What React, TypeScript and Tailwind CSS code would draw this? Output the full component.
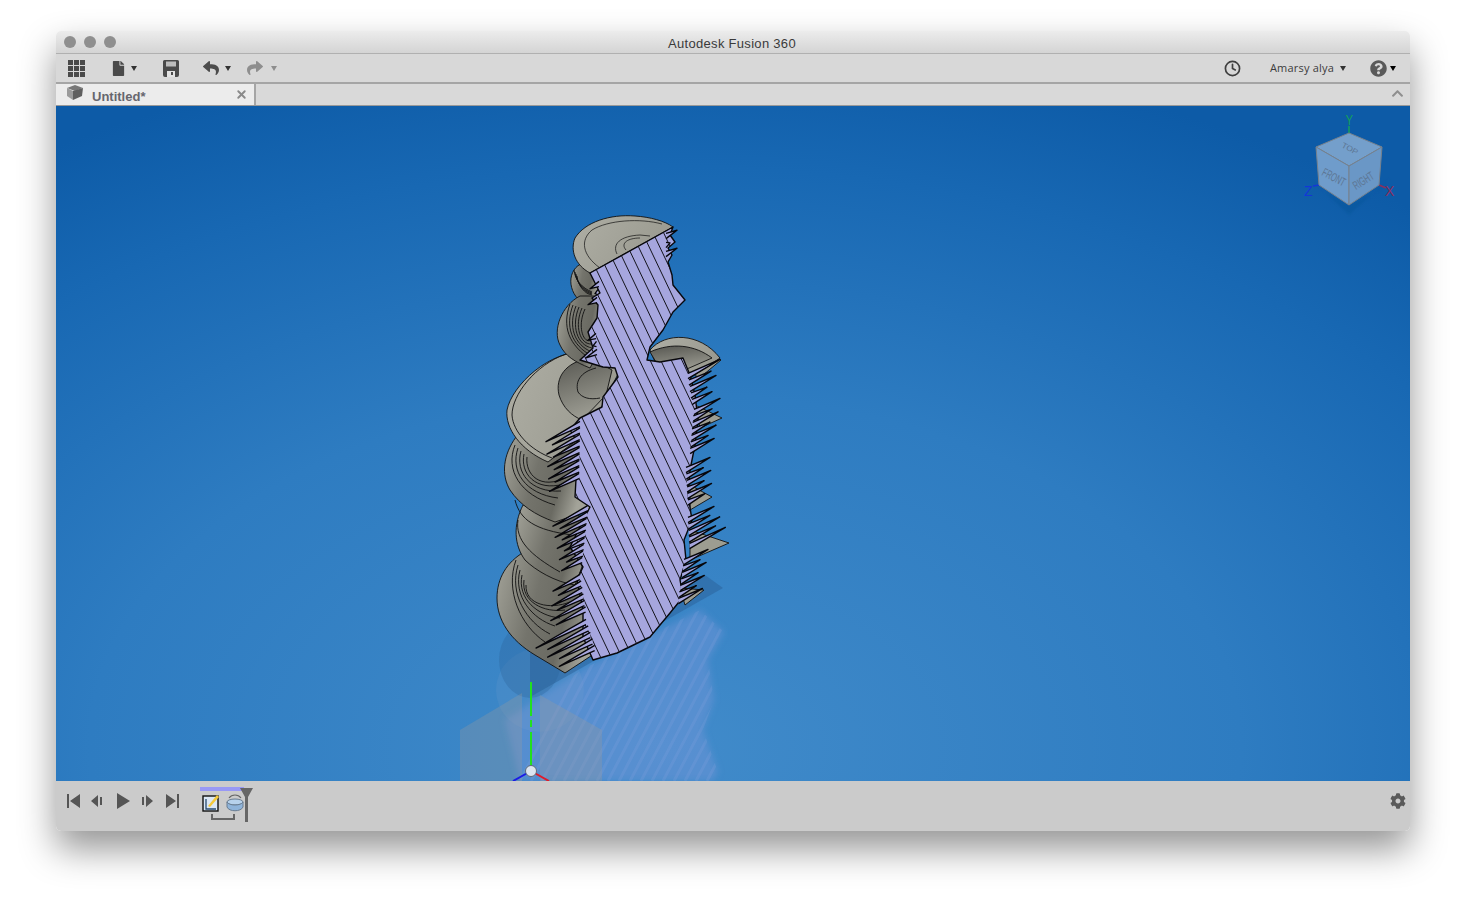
import React from 'react';
import { Clock, X } from 'lucide-react';
import { FaCog, FaFile, FaQuestionCircle, FaReply, FaShare, FaChevronUp } from 'react-icons/fa';

const faceOutline =
  '590,273 600,293 592,298 598,305 597,318 588,332 593,348 580,360 603,367 615,368 618,377 603,397 602,407 580,418 570,430 578,443 575,497 590,507 570,547 583,567 577,580 583,610 583,637 593,660 617,653 650,637 670,613 683,597 680,580 686,560 684,540 692,520 688,495 690,470 695,445 698,420 695,395 690,375 683,358 660,362 647,360 650,347 663,330 673,312 685,300 673,285 672,275 668,262 672,255 668,248 675,242 670,235 673,227';

const reflection = 'M585 668 L700 610 L724 632 L708 660 L714 700 L703 730 L718 772 L712 781 L520 781 L505 720 Z';

const stripes = Array.from({ length: 48 }, (_, i) => 330 + i * 10.6);
const ghostStripes = Array.from({ length: 20 }, (_, i) => 520 + i * 11);

const plates = [
  '690,352 721,360 697,380',
  '695,405 722,418 700,428',
  '690,485 712,497 690,510',
  '690,530 729,543 690,560',
  '680,588 704,590 685,605',
];

// saw teeth on the cut edge: [base x, base y, tip x, tip y]
const leftTeeth: number[][] = [];
const addLeft = (y0: number, y1: number, bx0: number, bx1: number, tx0: number, tx1: number, step = 6.5) => {
  for (let y = y0, i = 0; y <= y1; y += step, i++) {
    const t = (y - y0) / (y1 - y0);
    const wob = i % 2 ? 6 : 0;
    const bx = bx0 + (bx1 - bx0) * t;
    const tx = tx0 + (tx1 - tx0) * t + wob;
    leftTeeth.push([bx, y, tx, y + (bx - tx) * 0.52]);
  }
};
addLeft(424, 482, 580, 579, 546, 550);
addLeft(508, 562, 588, 582, 553, 562);
addLeft(577, 612, 580, 586, 553, 550);
addLeft(622, 652, 586, 596, 536, 563);
addLeft(284, 300, 599, 597, 590, 588, 8);
addLeft(336, 352, 596, 597, 588, 586, 8);

const rightTeeth: number[][] = [];
const addRight = (y0: number, y1: number, bx0: number, bx1: number, tx0: number, tx1: number, step = 6.5) => {
  for (let y = y0, i = 0; y <= y1; y += step, i++) {
    const t = (y - y0) / (y1 - y0);
    const wob = i % 2 ? -7 : 0;
    const bx = bx0 + (bx1 - bx0) * t;
    const tx = tx0 + (tx1 - tx0) * t + wob;
    rightTeeth.push([bx, y, tx, y - (tx - bx) * 0.52]);
  }
};
addRight(376, 402, 688, 692, 720, 712);
addRight(412, 452, 694, 690, 720, 714);
addRight(470, 504, 686, 688, 710, 712);
addRight(520, 552, 688, 690, 714, 728);
addRight(562, 604, 684, 678, 708, 702);
addRight(236, 262, 666, 666, 677, 677, 9);

const rings = [0, 1, 2, 3, 4, 5];

const ModelView = () => (
  <svg className="absolute inset-0 h-full w-full" viewBox="56 106 1354 675">
    <defs>
      <linearGradient id="disc" x1="0" y1="0" x2="1" y2="0.3">
        <stop offset="0%" stopColor="#a4a49a" />
        <stop offset="45%" stopColor="#74746c" />
        <stop offset="75%" stopColor="#6a6a62" />
        <stop offset="100%" stopColor="#a3a399" />
      </linearGradient>
      <linearGradient id="discLight" x1="0" y1="0" x2="1" y2="0.4">
        <stop offset="0%" stopColor="#aeaea4" />
        <stop offset="100%" stopColor="#9a9a90" />
      </linearGradient>
      <linearGradient id="hollow" x1="0.3" y1="0" x2="0.6" y2="1">
        <stop offset="0%" stopColor="#5c5c56" />
        <stop offset="100%" stopColor="#a2a298" />
      </linearGradient>
      <clipPath id="face">
        <polygon points={faceOutline} />
      </clipPath>
      <clipPath id="ghost">
        <path d={reflection} />
      </clipPath>
      <filter id="soft">
        <feGaussianBlur stdDeviation="1.5" />
      </filter>
      <filter id="softer">
        <feGaussianBlur stdDeviation="3" />
      </filter>
    </defs>

    {/* ground: reflection, shadow and origin planes */}
    <path d={reflection} fill="#6d93d8" fillOpacity="0.5" filter="url(#softer)" />
    <g clipPath="url(#ghost)" stroke="#8aa6e0" strokeOpacity="0.22" strokeWidth="3">
      {ghostStripes.map((x) => (
        <line key={x} x1={x} y1="781" x2={x + 90} y2="610" />
      ))}
    </g>
    <ellipse cx="540" cy="690" rx="44" ry="42" fill="#8aa6cc" fillOpacity="0.14" />
    <ellipse cx="530" cy="660" rx="31" ry="38" fill="#2a5f96" fillOpacity="0.3" />
    <path d="M530 697 L723 588 L705 575 L600 610 L530 650 Z" fill="#2a6097" fillOpacity="0.5" />
    <polygon points="460,730 522,693 522,781 460,781" fill="#9a9a9a" fillOpacity="0.3" />
    <polygon points="540,695 602,730 602,781 540,781" fill="#9a9a9a" fillOpacity="0.3" />

    {/* origin axes */}
    <line x1="531" y1="682" x2="531" y2="716" stroke="#22e01f" strokeWidth="2" />
    <line x1="531" y1="720" x2="531" y2="727" stroke="#22e01f" strokeWidth="2" />
    <line x1="531" y1="732" x2="531" y2="766" stroke="#22e01f" strokeWidth="2" />
    <line x1="531" y1="771" x2="513" y2="781" stroke="#1a1ae6" strokeWidth="2" />
    <line x1="531" y1="771" x2="549" y2="781" stroke="#e01a2a" strokeWidth="2" />
    <circle cx="531" cy="771" r="5.5" fill="#dbe4f0" stroke="#5d6a78" strokeWidth="1" />

    {/* turned body, lowest disc first */}
    <g stroke="#111" strokeWidth="0.9" strokeLinejoin="round">
      {plates.map((p) => (
        <polygon key={p} points={p} fill="#9d9d91" />
      ))}
      <path d="M565 673 L535 655 C510 640 497 620 497 598 C497 578 507 562 524 552 L600 560 L600 650 Z" fill="url(#disc)" />
      {rings.map((k) => (
        <path
          key={`low-${k}`}
          d={`M${516 + k * 2} ${560 + k * 5} C${505 + k * 4} ${590 + k * 3} ${520 + k * 6} ${625 - k * 3} ${545 + k * 5} ${642 - k * 8}`}
          fill="none"
        />
      ))}
      <path d="M523 505 C513 525 514 545 525 560 C535 570 555 582 575 585 L600 520 Z" fill="url(#disc)" />
      <path d="M518 520 C515 540 530 555 560 572" fill="none" />
      <path d="M516 437 C503 455 501 475 510 490 C520 505 535 515 555 522 L590 510 L590 440 Z" fill="url(#disc)" />
      {rings.slice(0, 5).map((k) => (
        <path
          key={`mid-${k}`}
          d={`M${515 + k * 3} ${445 + k * 3} C${505 + k * 5} ${470 + k} ${520 + k * 5} ${495 - k} ${555 + k * 3} ${505 - k * 7}`}
          fill="none"
        />
      ))}
      <path d="M515 500 C520 520 535 530 572 535" fill="none" />

      {/* back rim */}
      <path d="M650 350 C665 332 700 332 720 358 L690 378 L655 362 Z" fill="url(#discLight)" />
      <path d="M650 352 C672 342 695 345 712 358 L680 372 L656 362 Z" fill="url(#hollow)" />

      {/* big shoulder */}
      <path d="M585 352 C550 350 512 385 507 410 C505 428 520 450 548 462 L590 430 L620 370 Z" fill="url(#discLight)" />
      <path d="M566 354 C535 365 512 395 512 415 C513 432 530 450 552 458" fill="none" />
      <path d="M590 358 C565 362 555 378 559 395 C563 408 572 416 582 420 L606 395 L612 370 Z" fill="url(#hollow)" />
      <path d="M596 368 C580 372 575 382 578 392 C582 398 590 400 600 398" fill="none" />

      {/* neck */}
      <path d="M590 262 C570 262 565 285 578 299 L600 306 L600 262 Z" fill="url(#disc)" />
      {rings.slice(0, 4).map((k) => (
        <path key={`stack-${k}`} d={`M${574 + k} ${270 + k * 2} C${575 + k} ${280 + k * 2} ${582 + k} ${288 + k * 2} 592 ${292 + k}`} fill="none" />
      ))}
      <path d="M580 296 C562 305 552 330 560 345 C565 356 575 362 590 368 L605 340 L600 296 Z" fill="url(#disc)" />
      {rings.map((k) => (
        <path key={`neck-${k}`} d={`M${570 + k * 3} ${304 + k} C${562 + k * 3} ${326} ${568 + k * 3} ${345} ${592} ${360 - k * 4}`} fill="none" />
      ))}

      {/* head */}
      <path d="M590 273 C575 265 570 250 575 238 C585 222 610 214 635 216 C650 217 665 221 673 227 Z" fill="url(#discLight)" />
      <path d="M600 268 C582 255 580 240 592 230 C608 220 640 218 662 224" fill="none" strokeWidth="0.7" />
      <path d="M617 254 C612 244 620 236 640 235 L650 236" fill="none" strokeWidth="0.7" />
      <path d="M626 250 C620 243 628 238 640 238" fill="none" strokeWidth="0.7" />
    </g>

    {/* cut face */}
    <polygon points={faceOutline} fill="#a6a6de" stroke="#08080c" strokeWidth="1.4" strokeLinejoin="round" />
    <g clipPath="url(#face)" stroke="#14141c" strokeWidth="1">
      {stripes.map((x) => (
        <line key={x} x1={x} y1="200" x2={x + 238} y2="700" />
      ))}
    </g>

    {/* needles along the cut edge, open at the base so they run into the face */}
    <g fill="#a6a6de" stroke="#06060a" strokeWidth="1.4" strokeLinejoin="round">
      {leftTeeth.map(([bx, by, tx, ty], i) => (
        <path key={`lt-${i}`} d={`M${bx} ${by - 2.6} L${tx} ${ty} L${bx} ${by + 2.6}`} />
      ))}
      {rightTeeth.map(([bx, by, tx, ty], i) => (
        <path key={`rt-${i}`} d={`M${bx} ${by - 2.6} L${tx} ${ty} L${bx} ${by + 2.6}`} />
      ))}
    </g>

    {/* view cube */}
    <polygon points="1349,205 1322,190 1310,178 1349,215 1390,178 1379,190" fill="#0d4d8f" fillOpacity="0.35" filter="url(#soft)" />
    <line x1="1349" y1="126" x2="1349" y2="134" stroke="#16a05a" strokeWidth="1.5" />
    <line x1="1319" y1="185" x2="1313" y2="186" stroke="#1436d8" strokeWidth="1.5" />
    <line x1="1379" y1="185" x2="1386" y2="188" stroke="#8b2f5e" strokeWidth="1.5" />
    <g stroke="#77818c" strokeWidth="1" strokeLinejoin="round">
      <polygon points="1349,133 1382,147 1349,166 1316,147" fill="#749fcb" />
      <polygon points="1316,147 1349,166 1349,205 1319,185" fill="#6f9ccb" />
      <polygon points="1349,166 1382,147 1379,185 1349,205" fill="#6a97c6" />
    </g>
    <g fontFamily="'Liberation Sans', sans-serif" fontSize="10" fill="#5d7693">
      <text x="0" y="0" transform="translate(1341,147) rotate(28) scale(0.85,0.8)">TOP</text>
      <text x="0" y="0" transform="translate(1321,175) rotate(28) scale(0.72,1.2)">FRONT</text>
      <text x="0" y="0" transform="translate(1356,190) rotate(-32) scale(0.72,1.2)">RIGHT</text>
    </g>
    <g fontFamily="'Liberation Sans', sans-serif" fontSize="14">
      <text x="0" y="0" transform="translate(1345.5,125) scale(0.8,1)" fill="#12a15a">Y</text>
      <text x="1304" y="196" fill="#1436d8">Z</text>
      <text x="1385" y="196" fill="#8b2f5e">X</text>
    </g>
  </svg>
);

const Caret = ({ className = 'border-t-[#333]' }: { className?: string }) => (
  <span className={`h-0 w-0 border-x-[3.5px] border-t-[5px] border-x-transparent ${className}`} />
);

const GridIcon = () => (
  <div className="grid h-[17px] w-[17px] grid-cols-3 grid-rows-3 gap-px">
    {Array.from({ length: 9 }, (_, i) => (
      <span key={i} className="bg-[#4a4a4a]" />
    ))}
  </div>
);

const SaveIcon = () => (
  <svg width="16" height="17" viewBox="0 0 16 17" className="ml-[26px]">
    <path d="M0 1.5A1.5 1.5 0 0 1 1.5 0h13A1.5 1.5 0 0 1 16 1.5V15a2 2 0 0 1-2 2H2a2 2 0 0 1-2-2z" fill="#4a4a4a" />
    <rect x="3" y="1.5" width="10" height="5" fill="#bdbdbd" />
    <rect x="4" y="11" width="8" height="6" fill="#e2e2e2" />
    <rect x="8" y="12" width="2" height="3" fill="#4a4a4a" />
  </svg>
);

const TransportIcon = ({ d }: { d: string }) => (
  <svg width="14" height="16" viewBox="0 0 14 16" fill="#555">
    <path d={d} />
  </svg>
);

const App = () => (
  <div className="h-[911px] w-[1466px] overflow-hidden bg-white pl-[56px] pt-[31px] font-['Liberation_Sans',sans-serif]">
    <div className="flex h-[800px] w-[1354px] flex-col overflow-hidden rounded-[5px] shadow-[0_18px_36px_rgba(0,0,0,0.42)]">
      <div className="flex h-[23px] shrink-0 items-center border-b border-[#b0b0b0] bg-gradient-to-b from-[#ececec] to-[#d4d4d4] pl-[8px]">
        <div className="flex gap-[8px]">
          <span className="h-[12px] w-[12px] rounded-full bg-[#8f8f8f]" />
          <span className="h-[12px] w-[12px] rounded-full bg-[#8f8f8f]" />
          <span className="h-[12px] w-[12px] rounded-full bg-[#8f8f8f]" />
        </div>
        <div className="flex-1 pr-[62px] pt-[3px] text-center text-[13px] tracking-[0.3px] text-[#3a3a3a]">Autodesk Fusion 360</div>
      </div>

      <div className="flex h-[30px] shrink-0 items-center border-b-2 border-[#a5a5a5] bg-[#d8d8d8] pl-[12px] pr-[14px]">
        <GridIcon />
        <div className="ml-[26px] flex items-center gap-[5px]">
          <FaFile size={15} color="#4a4a4a" />
          <Caret />
        </div>
        <SaveIcon />
        <div className="ml-[24px] flex items-center gap-[6px]">
          <FaReply size={16} color="#4c4c4c" />
          <Caret />
        </div>
        <div className="ml-[16px] flex items-center gap-[8px]">
          <FaShare size={16} color="#8e8e8e" />
          <Caret className="border-t-[#8e8e8e]" />
        </div>
        <Clock size={17} strokeWidth={2.4} color="#3f3f3f" className="ml-auto" />
        <span className="ml-[29px] font-['Open_Sans',sans-serif] text-[11px] tracking-[0.2px] text-[#3c3c3c]">Amarsy alya</span>
        <Caret className="ml-[6px] border-t-[#333]" />
        <FaQuestionCircle size={17} color="#5a5a5a" className="ml-[24px]" />
        <Caret className="ml-[3px]" />
      </div>

      <div className="flex h-[22px] shrink-0 border-b border-[#999] bg-[#d9d9d9]">
        <div className="flex w-[200px] items-center border-r-2 border-[#a5a5a5] bg-[#ececec] pl-[10px] pr-[6px]">
          <svg width="18" height="16" viewBox="0 0 18 16" className="mb-[3px]">
            <polygon points="1,3 9,0 17,3 9,6" fill="#777" />
            <polygon points="1,3 7,6 7,15 1,11" fill="#9b9b9b" />
            <polygon points="7,6 17,3 16,11 7,15" fill="#5f5f5f" />
          </svg>
          <span className="ml-[8px] pt-[4px] text-[13px] font-bold text-[#66666e]">Untitled*</span>
          <X size={13} strokeWidth={3.5} color="#8a8a8a" className="ml-auto" />
        </div>
        <FaChevronUp size={13} color="#8f8f8f" className="ml-auto mr-[6px] mt-[3px]" />
      </div>

      <div className="relative h-[675px] shrink-0 overflow-hidden bg-[radial-gradient(ellipse_85%_105%_at_45%_95%,#418bca_0%,#2e7cc1_50%,#1868b3_82%,#0d5ba7_100%)]">
        <ModelView />
      </div>

      <div className="flex h-[50px] shrink-0 items-center bg-[#cbcbcb] pl-[10px] pr-[4px]">
        <div className="mb-[10px] flex items-center gap-[11px]">
          <TransportIcon d="M1 1h2v14H1zM14 1v14L4 8z" />
          <TransportIcon d="M0 8l7-6v12zM9 4h2v8H9z" />
          <TransportIcon d="M1 0l13 8-13 8z" />
          <TransportIcon d="M1 4h2v8H1zM5 2l7 6-7 6z" />
          <TransportIcon d="M0 1l10 7-10 7zM11 1h2v14h-2z" />
        </div>
        <div className="relative mb-[2px] ml-[20px] h-[36px] w-[56px]">
          <div className="h-[4px] w-[44px] bg-[#9999f5]" />
          <div className="mt-[3px] flex items-center gap-[6px] pl-[2px]">
            <svg width="18" height="18" viewBox="0 0 18 18">
              <rect x="1" y="2" width="15" height="15" fill="#dbe7f5" stroke="#111" strokeWidth="1.4" />
              <path d="M4 5v10h10" fill="none" stroke="#27496d" strokeWidth="1.3" />
              <path d="M6 12L15 1l2 2-9 10z" fill="#f5c93a" />
            </svg>
            <svg width="18" height="18" viewBox="0 0 18 18">
              <path d="M3 4C6 0 12 0 15 4" fill="none" stroke="#666" strokeWidth="1.2" />
              <ellipse cx="9" cy="8" rx="8" ry="3" fill="#b7d2ec" stroke="#6a7d91" />
              <path d="M1 8v5c2 5 14 5 16 0V8c-2 4-14 4-16 0z" fill="#8fb4da" stroke="#6a7d91" />
            </svg>
          </div>
          <div className="ml-[11px] mt-[2px] h-[6px] w-[24px] border-x-2 border-b-2 border-[#666]" />
          <svg className="absolute left-[40px] top-[1px]" width="13" height="34" viewBox="0 0 13 34">
            <path d="M0 0h13L8 9v25H5V9z" fill="#666" />
          </svg>
        </div>
        <FaCog size={16} color="#5a5a5a" className="mb-[10px] ml-auto" />
      </div>
    </div>
  </div>
);

export default App;
